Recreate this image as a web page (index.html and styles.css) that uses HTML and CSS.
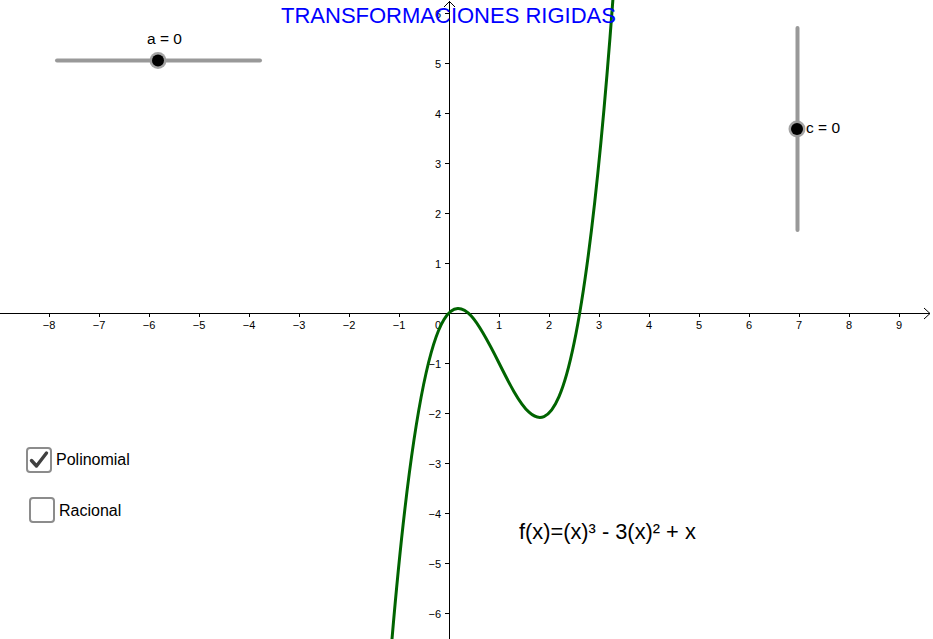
FILE: index.html
```html
<!DOCTYPE html>
<html lang="es">
<head>
<meta charset="utf-8">
<title>Transformaciones rigidas</title>
<link rel="stylesheet" href="styles.css">
</head>
<body>
<div class="applet">
  <svg class="graph" width="933" height="639" viewBox="0 0 933 639" xmlns="http://www.w3.org/2000/svg">
    <defs>
      <clipPath id="view"><rect x="0" y="0" width="933" height="639"/></clipPath>
    </defs>
    <g class="axes">
      <line x1="0" y1="313.5" x2="930" y2="313.5"/>
      <polyline class="arrow" points="924,308 930,313.5 924,319"/>
      <line x1="449.5" y1="1" x2="449.5" y2="639"/>
      <polyline class="arrow" points="444,7 449.5,1.5 455,7"/>
      <g class="ticks">
        <path d="M49.5 313v4M99.5 313v4M149.5 313v4M199.5 313v4M249.5 313v4M299.5 313v4M349.5 313v4M399.5 313v4M499.5 313v4M549.5 313v4M599.5 313v4M649.5 313v4M699.5 313v4M749.5 313v4M799.5 313v4M849.5 313v4M899.5 313v4"/>
        <path d="M445 13.5h4M445 63.5h4M445 113.5h4M445 163.5h4M445 213.5h4M445 263.5h4M445 363.5h4M445 413.5h4M445 463.5h4M445 513.5h4M445 563.5h4M445 613.5h4"/>
      </g>
    </g>
    <g class="xlabels">
      <text x="49" y="329">−8</text>
      <text x="99" y="329">−7</text>
      <text x="149" y="329">−6</text>
      <text x="199" y="329">−5</text>
      <text x="249" y="329">−4</text>
      <text x="299" y="329">−3</text>
      <text x="349" y="329">−2</text>
      <text x="399" y="329">−1</text>
      <text x="438" y="329">0</text>
      <text x="499" y="329">1</text>
      <text x="549" y="329">2</text>
      <text x="599" y="329">3</text>
      <text x="649" y="329">4</text>
      <text x="699" y="329">5</text>
      <text x="749" y="329">6</text>
      <text x="799" y="329">7</text>
      <text x="849" y="329">8</text>
      <text x="899" y="329">9</text>
    </g>
    <g class="ylabels">
      <text x="441" y="18">6</text>
      <text x="441" y="68">5</text>
      <text x="441" y="118">4</text>
      <text x="441" y="168">3</text>
      <text x="441" y="218">2</text>
      <text x="441" y="268">1</text>
      <text x="441" y="368">−1</text>
      <text x="441" y="418">−2</text>
      <text x="441" y="468">−3</text>
      <text x="441" y="518">−4</text>
      <text x="441" y="568">−5</text>
      <text x="441" y="618">−6</text>
    </g>
    <path class="curve" clip-path="url(#view)" d="M389 675.4 C465.667 -284.47 542.333 1083.27 619 -88.2"/>
    <g class="slider">
      <line x1="57" y1="60.5" x2="260" y2="60.5"/>
      <line x1="797.5" y1="28" x2="797.5" y2="230"/>
    </g>
    <g class="knob">
      <circle class="halo" cx="158" cy="60.5" r="8.5"/>
      <circle class="dot" cx="158" cy="60.5" r="6"/>
      <circle class="halo" cx="797" cy="129" r="8.5"/>
      <circle class="dot" cx="797" cy="129" r="6"/>
    </g>
  </svg>

  <div class="title">TRANSFORMACIONES RIGIDAS</div>
  <div class="label label-a">a = 0</div>
  <div class="label label-c">c = 0</div>

  <label class="check check-poli">
    <span class="box">
      <svg width="22" height="22" viewBox="0 0 22 22"><path d="M3.5 11.5 L8.5 17 L18.5 4" /></svg>
    </span>
    <span class="check-text">Polinomial</span>
  </label>
  <label class="check check-rac">
    <span class="box"></span>
    <span class="check-text">Racional</span>
  </label>

  <div class="formula">f(x)=(x)³ - 3(x)² + x</div>
</div>
</body>
</html>
```
FILE: styles.css
```css
html, body {
  margin: 0;
  padding: 0;
  background: #ffffff;
}
body {
  font-family: "Liberation Sans", Arial, sans-serif;
  overflow: hidden;
}
.applet {
  position: relative;
  width: 933px;
  height: 639px;
  overflow: hidden;
  background: #ffffff;
}
.graph {
  position: absolute;
  left: 0;
  top: 0;
  display: block;
}
.axes line,
.axes path {
  stroke: #000000;
  stroke-width: 1;
  fill: none;
}
.axes .arrow {
  stroke: #000000;
  stroke-width: 1;
  fill: none;
}
.xlabels text,
.ylabels text {
  font-family: "Liberation Sans", Arial, sans-serif;
  font-size: 11px;
  fill: #000000;
}
.xlabels text { text-anchor: middle; }
.ylabels text { text-anchor: end; }
.curve {
  fill: none;
  stroke: #006400;
  stroke-width: 3;
}
.slider line {
  stroke: #999999;
  stroke-width: 4;
  stroke-linecap: round;
}
.knob .halo {
  fill: #9a9a9a;
  opacity: 0.9;
}
.knob .dot {
  fill: #000000;
}
.title {
  position: absolute;
  left: 281px;
  top: 3px;
  font-size: 22px;
  line-height: 25px;
  color: #0000ff;
  white-space: nowrap;
}
.label {
  position: absolute;
  font-size: 15.5px;
  line-height: 18px;
  color: #000000;
  white-space: nowrap;
}
.label-a { left: 147px; top: 30px; }
.label-c { left: 806px; top: 119px; }
.check {
  position: absolute;
  display: flex;
  align-items: center;
  gap: 4px;
}
.check-poli { left: 26px; top: 447px; }
.check-rac { left: 29px; top: 497px; }
.box {
  box-sizing: border-box;
  width: 26px;
  height: 26px;
  border: 2px solid #8c8c8c;
  border-radius: 4px;
  background: #ffffff;
  display: flex;
  align-items: center;
  justify-content: center;
}
.box svg path {
  fill: none;
  stroke: #404040;
  stroke-width: 3.4;
  stroke-linecap: round;
  stroke-linejoin: round;
}
.check-text {
  font-size: 16px;
  line-height: 18px;
  color: #000000;
}
.check-rac .check-text { margin-top: 1px; }
.formula {
  position: absolute;
  left: 519px;
  top: 519px;
  font-size: 21.8px;
  line-height: 26px;
  color: #000000;
  white-space: nowrap;
}
```
